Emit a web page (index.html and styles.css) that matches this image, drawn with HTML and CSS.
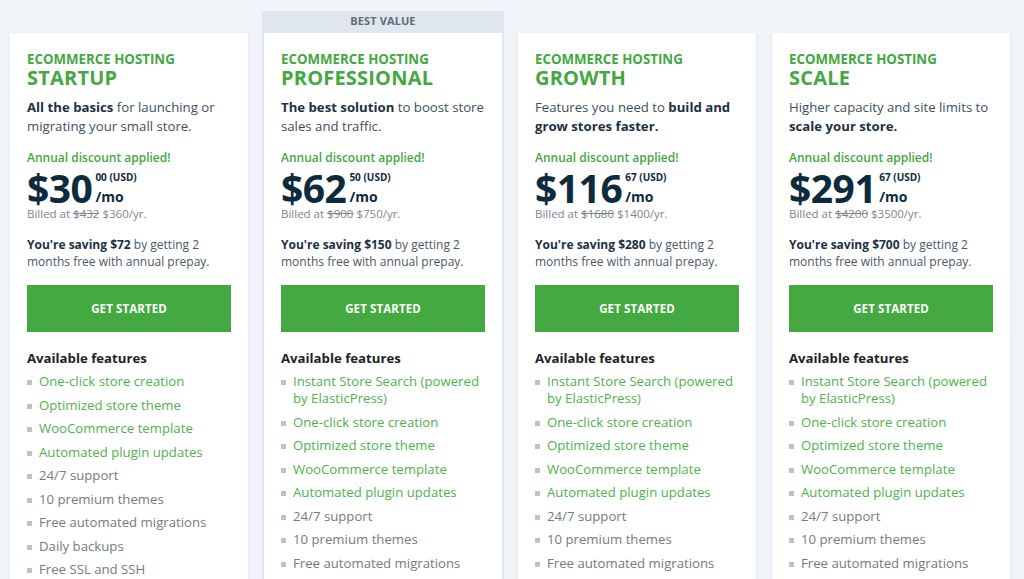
FILE: index.html
```html
<!DOCTYPE html>
<html lang="en">
<head>
<meta charset="utf-8">
<title>Ecommerce Hosting Plans</title>
<link rel="stylesheet" href="styles.css">
</head>
<body>
<div class="plans">
  <div class="plan">
    <div class="ribbon-space"></div>
    <div class="card">
      <div class="kicker">ECOMMERCE HOSTING</div>
      <div class="name">STARTUP</div>
      <p class="desc"><b>All the basics</b> for launching or migrating your small store.</p>
      <div class="discount">Annual discount applied!</div>
      <div class="price"><span class="amount">$30</span><span class="side"><span class="cents">00 (USD)</span><span class="per">/mo</span></span></div>
      <div class="billed">Billed at <s>$432</s> $360/yr.</div>
      <p class="saving"><b>You're saving $72</b> by getting 2 months free with annual prepay.</p>
      <a class="btn" href="#">GET STARTED</a>
      <div class="feat-title">Available features</div>
      <ul class="features">
        <li class="hl">One-click store creation</li>
        <li class="hl">Optimized store theme</li>
        <li class="hl">WooCommerce template</li>
        <li class="hl">Automated plugin updates</li>
        <li>24/7 support</li>
        <li>10 premium themes</li>
        <li>Free automated migrations</li>
        <li>Daily backups</li>
        <li>Free SSL and SSH</li>
        <li>Staging environment</li>
      </ul>
    </div>
  </div>
  <div class="plan">
    <div class="ribbon">BEST VALUE</div>
    <div class="card best">
      <div class="kicker">ECOMMERCE HOSTING</div>
      <div class="name">PROFESSIONAL</div>
      <p class="desc"><b>The best solution</b> to boost store sales and traffic.</p>
      <div class="discount">Annual discount applied!</div>
      <div class="price"><span class="amount">$62</span><span class="side"><span class="cents">50 (USD)</span><span class="per">/mo</span></span></div>
      <div class="billed">Billed at <s>$900</s> $750/yr.</div>
      <p class="saving"><b>You're saving $150</b> by getting 2 months free with annual prepay.</p>
      <a class="btn" href="#">GET STARTED</a>
      <div class="feat-title">Available features</div>
      <ul class="features">
        <li class="hl">Instant Store Search (powered by ElasticPress)</li>
        <li class="hl">One-click store creation</li>
        <li class="hl">Optimized store theme</li>
        <li class="hl">WooCommerce template</li>
        <li class="hl">Automated plugin updates</li>
        <li>24/7 support</li>
        <li>10 premium themes</li>
        <li>Free automated migrations</li>
        <li>Daily backups</li>
      </ul>
    </div>
  </div>
  <div class="plan">
    <div class="ribbon-space"></div>
    <div class="card">
      <div class="kicker">ECOMMERCE HOSTING</div>
      <div class="name">GROWTH</div>
      <p class="desc">Features you need to <b>build and grow stores faster.</b></p>
      <div class="discount">Annual discount applied!</div>
      <div class="price"><span class="amount">$116</span><span class="side"><span class="cents">67 (USD)</span><span class="per">/mo</span></span></div>
      <div class="billed">Billed at <s>$1680</s> $1400/yr.</div>
      <p class="saving"><b>You're saving $280</b> by getting 2 months free with annual prepay.</p>
      <a class="btn" href="#">GET STARTED</a>
      <div class="feat-title">Available features</div>
      <ul class="features">
        <li class="hl">Instant Store Search (powered by ElasticPress)</li>
        <li class="hl">One-click store creation</li>
        <li class="hl">Optimized store theme</li>
        <li class="hl">WooCommerce template</li>
        <li class="hl">Automated plugin updates</li>
        <li>24/7 support</li>
        <li>10 premium themes</li>
        <li>Free automated migrations</li>
        <li>Daily backups</li>
      </ul>
    </div>
  </div>
  <div class="plan">
    <div class="ribbon-space"></div>
    <div class="card">
      <div class="kicker">ECOMMERCE HOSTING</div>
      <div class="name">SCALE</div>
      <p class="desc">Higher capacity and site limits to <b>scale your store.</b></p>
      <div class="discount">Annual discount applied!</div>
      <div class="price"><span class="amount">$291</span><span class="side"><span class="cents">67 (USD)</span><span class="per">/mo</span></span></div>
      <div class="billed">Billed at <s>$4200</s> $3500/yr.</div>
      <p class="saving"><b>You're saving $700</b> by getting 2 months free with annual prepay.</p>
      <a class="btn" href="#">GET STARTED</a>
      <div class="feat-title">Available features</div>
      <ul class="features">
        <li class="hl">Instant Store Search (powered by ElasticPress)</li>
        <li class="hl">One-click store creation</li>
        <li class="hl">Optimized store theme</li>
        <li class="hl">WooCommerce template</li>
        <li class="hl">Automated plugin updates</li>
        <li>24/7 support</li>
        <li>10 premium themes</li>
        <li>Free automated migrations</li>
        <li>Daily backups</li>
      </ul>
    </div>
  </div>
</div>
</body>
</html>
```
FILE: styles.css
```css
* { box-sizing: border-box; }
html, body { margin: 0; padding: 0; }
body {
  background: #f1f5f9;
  font-family: "Open Sans", "Liberation Sans", sans-serif;
  color: #1c3144;
  height: 579px;
  overflow: hidden;
}
.plans {
  display: grid;
  grid-template-columns: repeat(4, 238px);
  column-gap: 16px;
  padding: 11px 0 0 10px;
}
.plan { display: flex; flex-direction: column; }
.ribbon-space { height: 22px; }
.ribbon {
  height: 22px;
  margin: 0 -2px;
  background: #dfe6ee;
  color: #5f6b77;
  font-size: 11px;
  font-weight: 700;
  text-align: center;
  line-height: 20px;
  letter-spacing: 0.1px;
}
.card {
  background: #fff;
  padding: 18px 17px 20px;
  box-shadow: 0 1px 4px rgba(40, 70, 110, 0.08);
  min-height: 700px;
}
.card.best {
  box-shadow: 0 0 0 2px #dfe6ee;
}
.kicker {
  color: #43a83f;
  font-weight: 700;
  font-size: 13.3px;
  line-height: 17px;
}
.name {
  color: #43a83f;
  font-weight: 700;
  font-size: 20px;
  line-height: 20px;
  letter-spacing: 0.2px;
}
.desc {
  margin: 10px 0 0;
  font-size: 13.2px;
  line-height: 19px;
  color: #3d4f5e;
}
.desc b { color: #1c3144; font-weight: 700; }
.discount {
  margin-top: 14px;
  color: #43a83f;
  font-weight: 600;
  font-size: 12px;
  line-height: 16px;
}
.price {
  display: flex;
  align-items: flex-start;
  color: #0e2a3d;
  margin-top: 2px;
}
.amount {
  font-size: 39px;
  font-weight: 700;
  line-height: 40px;
  letter-spacing: -0.5px;
}
.side {
  display: flex;
  flex-direction: column;
  margin-left: 3px;
  padding-top: 3px;
}
.cents {
  font-size: 10px;
  font-weight: 700;
  line-height: 12px;
}
.per {
  font-size: 14px;
  font-weight: 700;
  line-height: 18px;
  margin-top: 5px;
}
.billed {
  font-size: 11.5px;
  color: #7b858e;
  line-height: 14px;
  margin-top: -1px;
}
.billed s { color: #7b858e; }
.saving {
  margin: 15px 0 0;
  font-size: 12px;
  line-height: 17px;
  color: #4a5966;
}
.saving b { color: #1c3144; font-weight: 700; }
.btn {
  display: flex;
  align-items: center;
  justify-content: center;
  height: 47px;
  margin-top: 15px;
  background: #43a940;
  color: #fff;
  font-weight: 700;
  font-size: 11.5px;
  text-decoration: none;
  letter-spacing: 0.1px;
}
.feat-title {
  margin-top: 17px;
  font-size: 13.2px;
  font-weight: 700;
  color: #1d2327;
  line-height: 18px;
}
.features {
  list-style: none;
  margin: 6px 0 0;
  padding: 0;
}
.features li {
  position: relative;
  padding-left: 12px;
  font-size: 13.2px;
  line-height: 17px;
  margin-bottom: 6.5px;
  color: #737b83;
}
.features li::before {
  content: "";
  position: absolute;
  left: 0;
  top: 7px;
  width: 5px;
  height: 5px;
  background: #b3c4d6;
}
.features li.hl { color: #4fb24c; }
```
